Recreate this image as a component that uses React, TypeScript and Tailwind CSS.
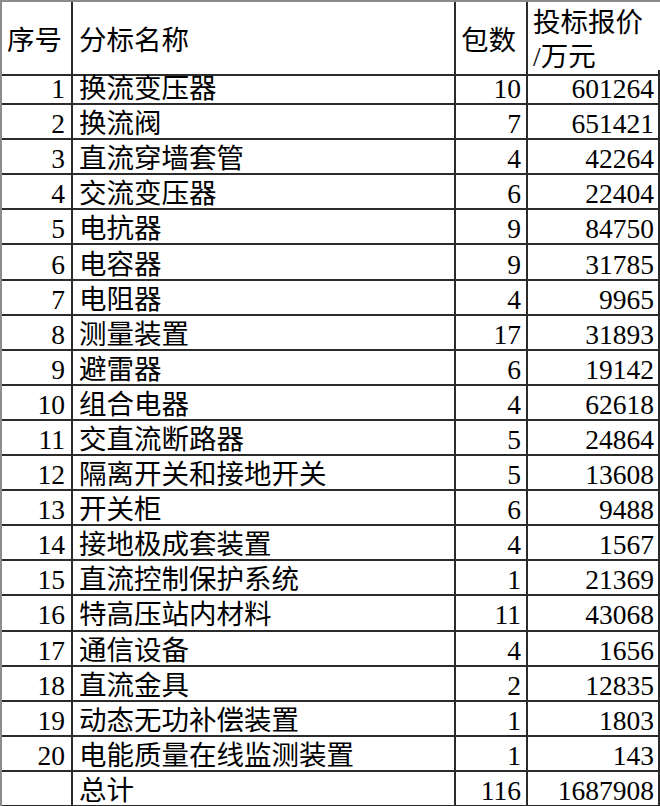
const rows: [number, string, number, number][] = [
  [1, '换流变压器', 10, 601264],
  [2, '换流阀', 7, 651421],
  [3, '直流穿墙套管', 4, 42264],
  [4, '交流变压器', 6, 22404],
  [5, '电抗器', 9, 84750],
  [6, '电容器', 9, 31785],
  [7, '电阻器', 4, 9965],
  [8, '测量装置', 17, 31893],
  [9, '避雷器', 6, 19142],
  [10, '组合电器', 4, 62618],
  [11, '交直流断路器', 5, 24864],
  [12, '隔离开关和接地开关', 5, 13608],
  [13, '开关柜', 6, 9488],
  [14, '接地极成套装置', 4, 1567],
  [15, '直流控制保护系统', 1, 21369],
  [16, '特高压站内材料', 11, 43068],
  [17, '通信设备', 4, 1656],
  [18, '直流金具', 2, 12835],
  [19, '动态无功补偿装置', 1, 1803],
  [20, '电能质量在线监测装置', 1, 143],
];

const cell = 'flex items-center border-r-2 border-b-2 border-[#2b2b2b] pt-[5px] leading-[30px] overflow-hidden whitespace-nowrap';

function Row({ no, name, packs, price }: { no: string; name: string; packs: number; price: number }) {
  return (
    <div className="grid h-[35.1px] grid-cols-[73px_383px_72px_1fr]">
      <div className={`${cell} justify-end pr-[6px]`}>{no}</div>
      <div className={`${cell} pl-[6px]`}>{name}</div>
      <div className={`${cell} justify-end pr-[5px]`}>{packs}</div>
      <div className={`${cell} justify-end border-r-0 pr-[4px]`}>{price}</div>
    </div>
  );
}

export default function App() {
  return (
    <div
      className="h-[806px] w-[660px] overflow-hidden border-t-2 border-l-2 border-[#8c8c8c] bg-white text-[27.5px] text-black"
      style={{ fontFamily: '"Liberation Serif", "Noto Sans CJK SC", serif' }}
    >
      <div className="grid h-[68px] grid-cols-[71px_383px_72px_1fr]">
        <div className={`${cell} pl-[5px] pt-0`}>序号</div>
        <div className={`${cell} pl-[6px] pt-0`}>分标名称</div>
        <div className={`${cell} pl-[5px] pt-0`}>包数</div>
        <div className="flex flex-col justify-center border-b-2 border-[#2b2b2b] pl-[5px] pt-[4px] leading-[34px]">
          <span>投标报价</span>
          <span>/万元</span>
        </div>
      </div>
      <div className="-ml-[2px]">
        {rows.map(([n, name, p, v]) => (
          <Row key={n} no={String(n)} name={name} packs={p} price={v} />
        ))}
        <Row no="" name="总计" packs={116} price={1687908} />
      </div>
    </div>
  );
}
